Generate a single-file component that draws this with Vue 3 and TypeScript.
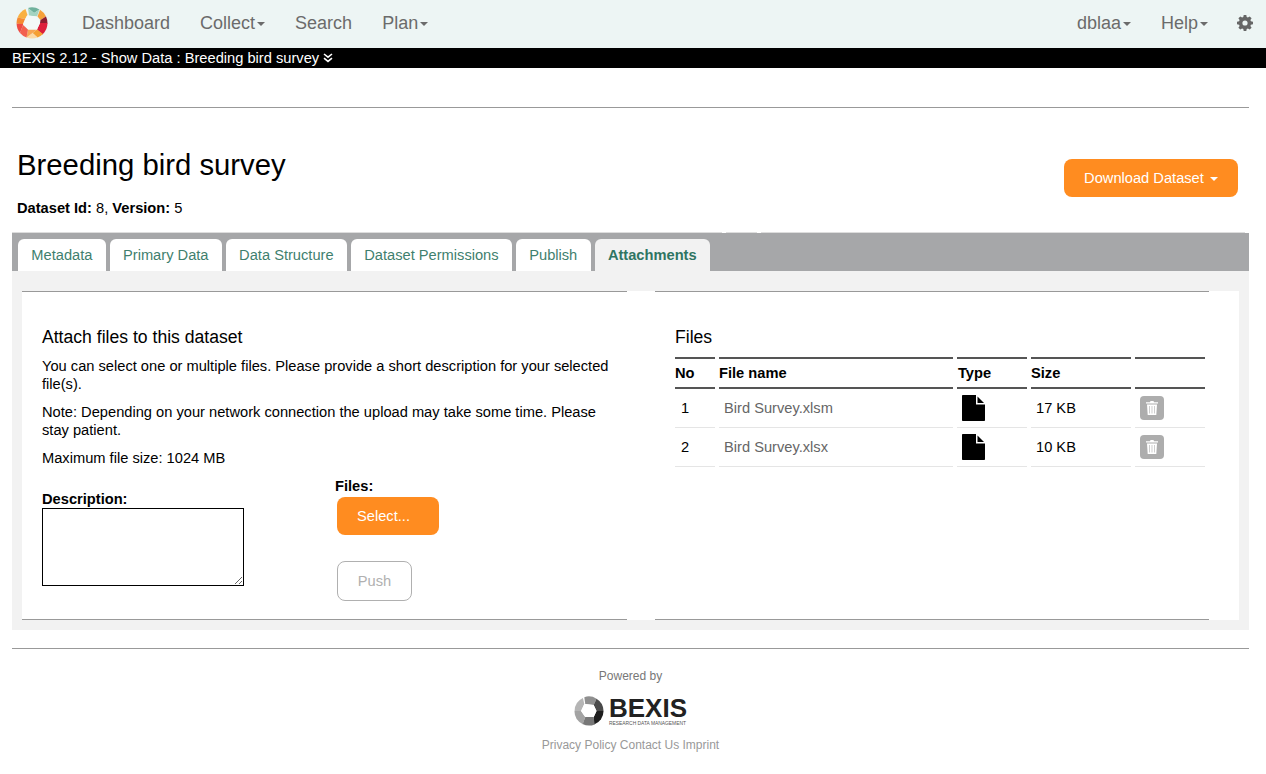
<script setup lang="ts">
interface FileRow {
  no: number
  name: string
  size: string
}

const leftNav = [
  { label: 'Dashboard', caret: false },
  { label: 'Collect', caret: true },
  { label: 'Search', caret: false },
  { label: 'Plan', caret: true },
]
const tabs = ['Metadata', 'Primary Data', 'Data Structure', 'Dataset Permissions', 'Publish', 'Attachments']
const files: FileRow[] = [
  { no: 1, name: 'Bird Survey.xlsm', size: '17 KB' },
  { no: 2, name: 'Bird Survey.xlsx', size: '10 KB' },
]
</script>

<template>
  <div class="page">
    <nav class="navbar">
      <svg class="logo" width="32" height="32" viewBox="0 0 32 32">
        <path d="M9.5 2 A15.5 15.5 0 0 0 1.6 10.5 L9 12 L11.5 8 Z" fill="#f9b040" />
        <path d="M12 .9 A15.5 15.5 0 0 1 23.5 2.4 L18 6 Z" fill="#6fb19c" />
        <path d="M12 .9 L18 6 L23.5 2.4 L21 9.5 L13 8.5 Z" fill="#a4d4c1" />
        <path d="M24 2.8 A15.5 15.5 0 0 1 30 9.5 L24.5 13 L21.5 9.5 Z" fill="#f6a13a" />
        <path d="M30 9.5 A15.5 15.5 0 0 1 31.5 16.5 L24 16 L24.5 13 Z" fill="#8e1c30" />
        <path d="M31.5 16 A15.5 15.5 0 0 1 26.5 27.4 L21 22.5 L24 16 Z" fill="#dd1f3c" />
        <path d="M27 27 A15.5 15.5 0 0 1 21.5 30.5 L16.5 26 L21 22.5 Z" fill="#f5a033" />
        <path d="M21.5 30.5 A15.5 15.5 0 0 1 10.5 30.5 L16.5 26 Z" fill="#fcd9a4" />
        <path d="M10.5 30.5 L16.5 26 L21 22.5 L12 22.5 Z" fill="#f8a552" />
        <path d="M10.5 30.5 A15.5 15.5 0 0 1 4 26 L7 18 L12 22.5 Z" fill="#f2604f" />
        <path d="M4 26 A15.5 15.5 0 0 1 .6 16.5 L7 16 L7 18 Z" fill="#ee4b43" />
        <path d="M.5 16.5 A15.5 15.5 0 0 1 1.6 10.5 L9 12 L7 17 Z" fill="#f58a32" />
        <path d="M11 8.5 L21 9.5 L24 16 L21 22.5 L12 22.5 L7.5 16.5 Z" fill="#f4f9f8" />
      </svg>
      <ul class="nav-list">
        <li v-for="item in leftNav" :key="item.label">
          {{ item.label }}<span v-if="item.caret" class="caret" />
        </li>
      </ul>
      <ul class="nav-list nav-right">
        <li>dblaa<span class="caret" /></li>
        <li>Help<span class="caret" /></li>
        <li class="gear-item">
          <svg width="16" height="16" viewBox="0 0 16 16">
            <path
              fill="#666"
              fill-rule="evenodd"
              d="M6.7 0h2.6l.4 2.1 1.2.5L12.7 1.4l1.9 1.9-1.2 1.8.5 1.2 2.1.4v2.6l-2.1.4-.5 1.2 1.2 1.8-1.9 1.9-1.8-1.2-1.2.5-.4 2.1H6.7l-.4-2.1-1.2-.5-1.8 1.2-1.9-1.9 1.2-1.8-.5-1.2L0 9.3V6.7l2.1-.4.5-1.2-1.2-1.8 1.9-1.9 1.8 1.2 1.2-.5zM8 5.4a2.6 2.6 0 1 0 0 5.2 2.6 2.6 0 0 0 0-5.2z"
            />
          </svg>
        </li>
      </ul>
    </nav>

    <div class="title-bar">
      BEXIS 2.12 - Show Data : Breeding bird survey
      <svg width="10" height="10" viewBox="0 0 10 10" fill="none" stroke="#fff" stroke-width="1.6">
        <path d="M1 1l4 3.2L9 1M1 5.2l4 3.2 4-3.2" />
      </svg>
    </div>

    <main class="content">
      <hr class="rule">

      <header class="dataset-head">
        <div>
          <h1>Breeding bird survey</h1>
          <p class="dataset-id"><b>Dataset Id:</b> 8, <b>Version:</b> 5</p>
        </div>
        <button class="btn-orange download">Download Dataset <span class="caret caret-white" /></button>
      </header>

      <div class="tabs">
        <div v-for="tab in tabs" :key="tab" class="tab" :class="{ active: tab === 'Attachments' }">{{ tab }}</div>
      </div>

      <section class="tab-body">
        <div class="panels">
          <div class="panel panel-left">
            <h2>Attach files to this dataset</h2>
            <p>You can select one or multiple files. Please provide a short description for your selected file(s).</p>
            <p>Note: Depending on your network connection the upload may take some time. Please stay patient.</p>
            <p>Maximum file size: 1024 MB</p>
            <div class="upload">
              <div class="desc">
                <label>Description:</label>
                <textarea />
              </div>
              <div class="file-col">
                <label>Files:</label>
                <button class="btn-orange select">Select...</button>
                <button class="push">Push</button>
              </div>
            </div>
          </div>

          <div class="panel panel-right">
            <h2>Files</h2>
            <table>
              <thead>
                <tr>
                  <th>No</th>
                  <th>File name</th>
                  <th>Type</th>
                  <th>Size</th>
                  <th />
                </tr>
              </thead>
              <tbody>
                <tr v-for="file in files" :key="file.no">
                  <td class="no">{{ file.no }}</td>
                  <td class="name">{{ file.name }}</td>
                  <td>
                    <svg class="file-icon" width="23" height="26" viewBox="0 0 23 26">
                      <path d="M.8 0H14V9.5H23V25.2a.8.8 0 0 1-.8.8H.8a.8.8 0 0 1-.8-.8V.8A.8.8 0 0 1 .8 0z" fill="#000" />
                      <path d="M15.5 1.5L22 8H15.5z" fill="#000" />
                    </svg>
                  </td>
                  <td class="size">{{ file.size }}</td>
                  <td>
                    <span class="trash">
                      <svg width="12" height="14" viewBox="0 0 12 14" fill="#fff">
                        <path d="M4.5 0h3l.5 1.2H12v1.3H0V1.2h4zM1 3.5h10l-.7 10.5H1.7zM3.4 5v7.5h.6V5zm2.3 0v7.5h.6V5zm2.3 0v7.5h.6V5z" fill-rule="evenodd" />
                      </svg>
                    </span>
                  </td>
                </tr>
              </tbody>
            </table>
          </div>
        </div>
      </section>

      <hr class="rule foot-rule">

      <footer class="footer">
        <div class="powered">Powered by</div>
        <div class="brand">
          <svg width="30" height="30" viewBox="0 0 32 32">
            <path d="M9.5 2 A15.5 15.5 0 0 0 .6 16 L7.5 16 L11 8.5 Z" fill="#b5b5b5" />
            <path d="M11 1.2 A15.5 15.5 0 0 1 24 2.8 L21 9.5 L12 8.5 Z" fill="#8f8f8f" />
            <path d="M24 2.8 A15.5 15.5 0 0 1 31.5 16 L24 16 L21 9.5 Z" fill="#4a4a4a" />
            <path d="M31.5 16 A15.5 15.5 0 0 1 21.5 30.5 L21 22.5 L24 16 Z" fill="#1e1e1e" />
            <path d="M22 30.3 A15.5 15.5 0 0 1 9 29.8 L12 22.5 L21 22.5 Z" fill="#777" />
            <path d="M9.5 30 A15.5 15.5 0 0 1 .5 16 L7.5 16 L12 22.5 Z" fill="#a3a3a3" />
            <path d="M11 8.5 L21 9.5 L24 16 L21 22.5 L12 22.5 L7.5 16 Z" fill="#fff" />
          </svg>
          <div class="brand-text">
            <span class="brand-name">BEXIS</span>
            <span class="brand-sub">RESEARCH DATA MANAGEMENT</span>
          </div>
        </div>
        <div class="links">
          <span>Privacy Policy</span> <span>Contact Us</span> <span>Imprint</span>
        </div>
      </footer>
    </main>
  </div>
</template>

<style>
html,
body {
  margin: 0;
  background: #fff;
}
</style>

<style scoped>
.page {
  font-family: 'Liberation Sans', Arial, sans-serif;
  font-size: 14.67px;
  color: #000;
  height: 774px;
  overflow: hidden;
}

.navbar {
  height: 48px;
  box-sizing: border-box;
  background: #edf5f4;
  display: flex;
  align-items: center;
  padding: 0 13px 2px 16px;
}
.logo {
  flex: none;
}
.nav-list {
  list-style: none;
  display: flex;
  gap: 30px;
  margin: 0 0 0 34px;
  padding: 0;
  font-size: 18px;
  color: #6b6b6b;
}
.nav-right {
  margin-left: auto;
}
.gear-item {
  display: flex;
  align-items: center;
  margin-left: -1px;
}
.caret {
  display: inline-block;
  width: 0;
  height: 0;
  margin-left: 2px;
  vertical-align: middle;
  border-top: 4px solid #6b6b6b;
  border-left: 4px solid transparent;
  border-right: 4px solid transparent;
}
.caret-white {
  border-top-color: #fff;
}

.title-bar {
  height: 20px;
  line-height: 20px;
  background: #000;
  color: #fff;
  padding-left: 12px;
}

.content {
  padding: 0 17px 0 12px;
}
.rule {
  border: 0;
  border-top: 1px solid #999;
  margin: 39px 0 0;
}

.dataset-head {
  display: flex;
  justify-content: space-between;
  align-items: flex-start;
  padding: 40px 11px 0 5px;
  height: 85px;
}
h1 {
  font-size: 29.3px;
  font-weight: 400;
  line-height: 34px;
  margin: 0;
}
.dataset-id {
  margin: 18px 0 0;
  line-height: 16px;
}
.btn-orange {
  background: #ff8c20;
  color: #fff;
  border: 0;
  border-radius: 8px;
  font: inherit;
}
.download {
  height: 38px;
  width: 174px;
  margin-top: 11px;
}

.tabs {
  background: #a6a7a9;
  height: 38px;
  display: flex;
  align-items: flex-end;
  gap: 4px;
  padding-left: 6px;
  box-sizing: border-box;
  position: relative;
}
.tabs::before {
  content: '';
  position: absolute;
  top: -1px;
  left: 0;
  right: 4px;
  height: 1px;
  background: linear-gradient(to right, #ddd 710px, #fff 710px, #fff 714px, #ddd 714px, #ddd 745px, #fff 745px, #fff 749px, #ddd 749px);
}
.tab {
  height: 32px;
  line-height: 32px;
  padding: 0 13.3px;
  background: #fff;
  color: #3f7f6e;
  border-radius: 6px 6px 0 0;
}
.tab.active {
  background: #f2f2f2;
  font-weight: 700;
  color: #2f7562;
}

.tab-body {
  background: #f2f2f2;
  height: 359px;
  box-sizing: border-box;
  padding: 20px 10px 10px;
}
.panels {
  background: #fff;
  height: 329px;
  display: flex;
}
.panel {
  height: 329px;
  box-sizing: border-box;
  padding: 35px 14px 0 20px;
  position: relative;
}
.panel::before,
.panel::after {
  content: '';
  position: absolute;
  left: 0;
  height: 1px;
  background: #999;
}
.panel::before {
  top: 0;
}
.panel::after {
  bottom: 0;
}
.panel-left {
  width: 605px;
}
.panel-left::before,
.panel-left::after {
  right: 0;
}
.panel-right {
  flex: 1;
  margin-left: 28px;
}
.panel-right::before,
.panel-right::after {
  right: 30px;
}
h2 {
  font-size: 17.6px;
  font-weight: 400;
  line-height: 22px;
  margin: 0 0 9px;
}
.panel p {
  margin: 0 0 10px;
  line-height: 18px;
}

.upload {
  display: flex;
}
.desc {
  width: 293px;
  padding-top: 14px;
}
.desc label,
.file-col label {
  display: block;
  font-weight: 700;
  line-height: 16px;
}
.desc textarea {
  display: block;
  width: 202px;
  height: 78px;
  box-sizing: border-box;
  border: 1px solid #000;
  margin: 1px 0 0;
  padding: 2px;
  background: #fff;
  outline: none;
}
.file-col {
  display: flex;
  flex-direction: column;
  align-items: flex-start;
  padding-top: 1px;
}
.select {
  margin: 3px 0 0 2px;
  width: 102px;
  height: 38px;
  padding: 0 0 0 20px;
  text-align: left;
}
.push {
  margin: 26px 0 0 2px;
  width: 75px;
  height: 40px;
  background: #fff;
  border: 1px solid #b0b0b0;
  border-radius: 8px;
  color: #b0b0b0;
  font: inherit;
}

table {
  width: 538px;
  border-collapse: separate;
  border-spacing: 4px 0;
  margin-left: -4px;
  table-layout: fixed;
}
th {
  text-align: left;
  box-sizing: border-box;
  height: 32px;
  padding: 0;
  border-top: 2px solid #555;
  border-bottom: 2px solid #555;
}
th:nth-child(1) {
  width: 40px;
}
th:nth-child(2) {
  width: 234px;
}
th:nth-child(3) {
  width: 70px;
  padding-left: 1px;
}
th:nth-child(4) {
  width: 100px;
}
td {
  height: 38px;
  padding: 0;
  border-bottom: 1px solid #e5e5e5;
  vertical-align: middle;
}
.no {
  padding-left: 6px;
}
.name {
  padding-left: 5px;
  color: #666;
}
.size {
  padding-left: 5px;
}
.file-icon {
  display: block;
  margin-left: 5px;
}
.trash {
  display: flex;
  align-items: center;
  justify-content: center;
  width: 24px;
  height: 24px;
  margin-left: 5px;
  background: #adadad;
  border-radius: 4px;
}

.foot-rule {
  margin-top: 18px;
}
.footer {
  text-align: center;
  font-size: 12px;
  color: #8a8a8a;
}
.powered {
  margin-top: 20px;
  line-height: 14px;
  color: #777;
}
.brand {
  display: flex;
  justify-content: center;
  align-items: center;
  gap: 5px;
  margin-top: 12px;
  height: 32px;
}
.brand-text {
  display: flex;
  flex-direction: column;
  align-items: flex-start;
}
.brand-name {
  font-family: 'Liberation Sans', sans-serif;
  font-size: 26px;
  font-weight: 700;
  color: #222;
  line-height: 26px;
}
.brand-sub {
  font-size: 4.9px;
  line-height: 6px;
  color: #555;
}
.links {
  margin-top: 11px;
  line-height: 14px;
  color: #999;
}
</style>
